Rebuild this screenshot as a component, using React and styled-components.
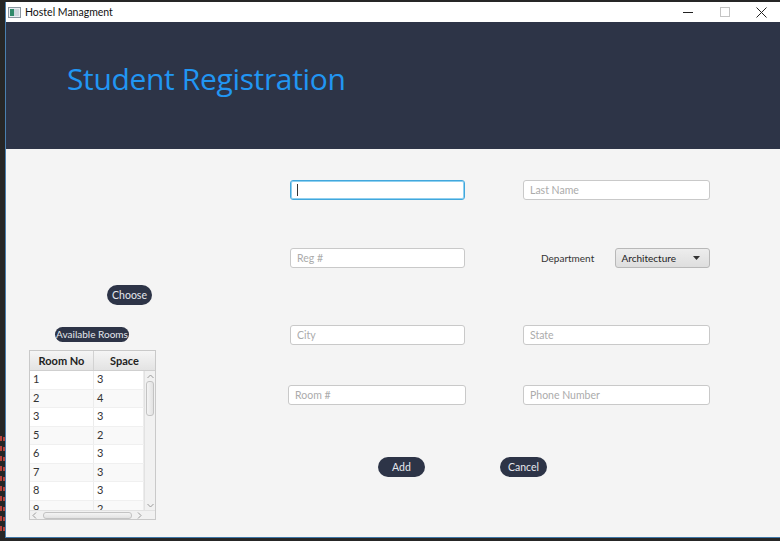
import React from 'react';
import styled, { createGlobalStyle } from 'styled-components';

const Global = createGlobalStyle`
  html, body {
    margin: 0;
    padding: 0;
    background: #262626;
    overflow: hidden;
  }
  * { box-sizing: border-box; }
`;

const ui = `"Lato", "Open Sans", sans-serif`;

const Desktop = styled.div`
  display: flex;
  width: 780px;
  height: 541px;
  padding-top: 2px;
  padding-bottom: 3px;
  font-family: ${ui};
`;

const Strip = styled.div`
  width: 5px;
  flex: none;
  overflow: hidden;
  padding-top: 432px;
`;

const Window = styled.div`
  flex: 1;
  display: flex;
  flex-direction: column;
  border-left: 1px solid #4a7fae;
  border-bottom: 1px solid #3f77a8;
  background: #f4f4f4;
`;

const TitleBar = styled.div`
  height: 20px;
  flex: none;
  display: flex;
  align-items: center;
  background: #fff;
  padding-left: 2px;
  font-size: 10.5px;
  color: #111;
`;

const TitleText = styled.span`
  margin-left: 4px;
  flex: 1;
`;

const WinButton = styled.div`
  width: 37px;
  height: 20px;
  display: flex;
  align-items: center;
  justify-content: center;
`;

const Header = styled.div`
  height: 127px;
  flex: none;
  background: #2d3447;
  padding: 36px 0 0 61px;
`;

const Title = styled.h1`
  margin: 0;
  font-family: "Open Sans", sans-serif;
  font-weight: 400;
  font-size: 30px;
  letter-spacing: -0.35px;
  color: #2196f3;
`;

const Body = styled.div`
  flex: 1;
  display: flex;
`;

const LeftPanel = styled.div`
  width: 274px;
  flex: none;
  display: flex;
  flex-direction: column;
  align-items: flex-start;
`;

const Pill = styled.button`
  border: none;
  background: #2d3447;
  color: #e6e8ee;
  font-family: ${ui};
  font-size: 10.5px;
  white-space: nowrap;
  height: ${p => (p.small ? '15px' : '20px')};
  width: ${p => p.w}px;
  border-radius: 10px;
  padding: 0 0 1px;
  display: flex;
  align-items: center;
  justify-content: center;
  margin-top: ${p => p.mt || 0}px;
  margin-left: ${p => p.ml || 0}px;
  ${p => p.small && 'font-size: 10px;'}
`;

const Table = styled.div`
  margin: 8px 0 0 23px;
  width: 127px;
  height: 170px;
  border: 1px solid #c9c9c9;
  background: #fff;
  display: flex;
  flex-direction: column;
  font-size: 11px;
  color: #333;
`;

const HeadRow = styled.div`
  height: 20px;
  flex: none;
  display: flex;
  background: linear-gradient(#f5f5f5, #e3e3e3);
  border-bottom: 1px solid #cfcfcf;
  font-weight: 700;
  font-size: 11px;
  color: #222;
`;

const HeadCell = styled.div`
  width: ${p => p.w}px;
  display: flex;
  align-items: center;
  justify-content: center;
  border-right: ${p => (p.last ? 'none' : '1px solid #d2d2d2')};
`;

const Middle = styled.div`
  height: 139px;
  display: flex;
`;

const Rows = styled.div`
  width: 114px;
  overflow: hidden;
`;

const Row = styled.div`
  height: 18.5px;
  display: flex;
  background: ${p => (p.odd ? '#f9f9f9' : '#fff')};
  border-bottom: 1px solid #f0f0f0;
`;

const Cell = styled.div`
  width: ${p => p.w}px;
  padding: 0 0 0 3px;
  line-height: 16px;
  border-right: 1px solid #ececec;
`;

const VScroll = styled.div`
  width: 11px;
  flex: none;
  background: #f1f1f1;
  border-left: 1px solid #e2e2e2;
  display: flex;
  flex-direction: column;
  align-items: center;
`;

const ArrowBox = styled.div`
  margin-top: ${p => p.mt || 0}px;
  margin-bottom: ${p => p.mb || 0}px;
  ${p => p.end && 'margin-top: auto;'}
`;

const VThumb = styled.div`
  width: 8px;
  height: 35px;
  margin-top: 2px;
  border: 1px solid #c3c3c3;
  border-radius: 3px;
  background: linear-gradient(90deg, #f4f4f4, #e2e2e2);
`;

const Bottom = styled.div`
  height: 10px;
  display: flex;
  background: #f1f1f1;
  border-top: 1px solid #e2e2e2;
`;

const HScroll = styled.div`
  width: 114px;
  display: flex;
  align-items: center;
  justify-content: space-between;
  padding: 0 2px;
`;

const HThumb = styled.div`
  width: 89px;
  height: 7px;
  border: 1px solid #c3c3c3;
  border-radius: 3px;
  background: linear-gradient(#f4f4f4, #e2e2e2);
`;

const Arrow = styled.svg`
  flex: none;
  display: block;
`;

const FormArea = styled.div`
  padding: 31px 0 0 10px;
  display: flex;
  flex-direction: column;
`;

const FormGrid = styled.div`
  display: grid;
  grid-template-columns: 175px 187px;
  grid-template-rows: 68px 77px 60px 20px;
  column-gap: 58px;
  align-items: start;
`;

const Field = styled.div`
  position: relative;
  width: ${p => p.w || 175}px;
  height: 20px;
  margin-left: ${p => p.shift || 0}px;
`;

const Input = styled.input`
  display: block;
  width: 100%;
  height: 20px;
  border: 1px solid ${p => (p.focused ? '#41a7dc' : '#c9c9c9')};
  box-shadow: ${p => (p.focused ? 'inset 0 0 0 1px #8fd0f0' : 'none')};
  border-radius: 3px;
  background: #fff;
  padding: 0 6px;
  font-family: ${ui};
  font-size: 10.5px;
  color: #333;
  outline: none;
  caret-color: transparent;
  &::placeholder { color: #ababab; }
`;

const Caret = styled.span`
  position: absolute;
  left: 7px;
  top: 4px;
  width: 1px;
  height: 12px;
  background: #333;
`;

const DeptCell = styled.div`
  display: flex;
  align-items: center;
  height: 20px;
  padding-left: 18px;
`;

const Label = styled.span`
  font-size: 10px;
  color: #333;
  width: 74px;
`;

const Combo = styled.div`
  width: 96px;
  height: 20px;
  border: 1px solid #b8b8b8;
  border-radius: 3px;
  background: linear-gradient(#ededed, #dedede);
  display: flex;
  align-items: center;
  justify-content: space-between;
  padding: 0 9px 0 6px;
  font-size: 10px;
  color: #222;
`;

const Actions = styled.div`
  display: flex;
  margin: 52px 0 0 88px;
  gap: 75px;
`;

const rooms = [
  [1, 3], [2, 4], [3, 3], [5, 2], [6, 3], [7, 3], [8, 3], [9, 2],
];

const Small = ({ d, w = 7, h = 5 }) => (
  <Arrow width={w} height={h} viewBox={`0 0 ${w} ${h}`}>
    <path d={d} fill="none" stroke="#9a9a9a" strokeWidth="1" />
  </Arrow>
);

// bits of a terminal peeking out from behind the window
const TermMarks = () => (
  <svg width="5" height="100">
    {Array.from({ length: 10 }, (_, i) => (
      <g key={i} fill="#b8433c">
        <rect x="0" y={i * 10 + 2} width="2" height="5" />
        <rect x="3" y={i * 10 + 3} width="2" height="4" />
      </g>
    ))}
  </svg>
);

export default function App() {
  return (
    <>
      <Global />
      <Desktop>
        <Strip><TermMarks /></Strip>
        <Window>
          <TitleBar>
            <svg width="13" height="11" viewBox="0 0 13 11">
              <rect x="0.5" y="0.5" width="12" height="10" fill="#e9eef2" stroke="#8a96a0" />
              <rect x="2" y="2" width="4" height="7" fill="#2f8a6a" />
              <rect x="6" y="2" width="5" height="7" fill="#cdd7de" />
            </svg>
            <TitleText>Hostel Managment</TitleText>
            <WinButton>
              <svg width="10" height="10"><path d="M0 5.5h10" stroke="#222" /></svg>
            </WinButton>
            <WinButton>
              <svg width="10" height="10"><rect x="0.5" y="0.5" width="9" height="9" fill="none" stroke="#c4c4c4" /></svg>
            </WinButton>
            <WinButton>
              <svg width="11" height="11"><path d="M0.5 0.5l10 10M10.5 0.5l-10 10" stroke="#222" /></svg>
            </WinButton>
          </TitleBar>
          <Header>
            <Title>Student Registration</Title>
          </Header>
          <Body>
            <LeftPanel>
              <Pill w={45} mt={136} ml={101}>Choose</Pill>
              <Pill small w={74} mt={22} ml={49}>Available Rooms</Pill>
              <Table>
                <HeadRow>
                  <HeadCell w={64}>Room No</HeadCell>
                  <HeadCell w={61} last>Space</HeadCell>
                </HeadRow>
                <Middle>
                  <Rows>
                    {rooms.map(([no, sp], i) => (
                      <Row key={no} odd={i % 2 === 1}>
                        <Cell w={64}>{no}</Cell>
                        <Cell w={50}>{sp}</Cell>
                      </Row>
                    ))}
                  </Rows>
                  <VScroll>
                    <ArrowBox mt={3}><Small d="M0.5 4L3.5 1L6.5 4" /></ArrowBox>
                    <VThumb />
                    <ArrowBox end mb={2}><Small d="M0.5 1L3.5 4L6.5 1" /></ArrowBox>
                  </VScroll>
                </Middle>
                <Bottom>
                  <HScroll>
                    <Small w={5} h={7} d="M4 0.5L1 3.5L4 6.5" />
                    <HThumb />
                    <Small w={5} h={7} d="M1 0.5L4 3.5L1 6.5" />
                  </HScroll>
                </Bottom>
              </Table>
            </LeftPanel>
            <FormArea>
              <FormGrid>
                <Field>
                  <Input focused defaultValue="" />
                  <Caret />
                </Field>
                <Field w={187}><Input placeholder="Last Name" /></Field>
                <Field><Input placeholder="Reg #" /></Field>
                <DeptCell>
                  <Label>Department</Label>
                  <Combo>
                    <span>Architecture</span>
                    <svg width="7" height="4"><path d="M0 0h7L3.5 4z" fill="#333" /></svg>
                  </Combo>
                </DeptCell>
                <Field><Input placeholder="City" /></Field>
                <Field w={187}><Input placeholder="State" /></Field>
                <Field w={178} shift={-2}><Input placeholder="Room #" /></Field>
                <Field w={187}><Input placeholder="Phone Number" /></Field>
              </FormGrid>
              <Actions>
                <Pill w={47}>Add</Pill>
                <Pill w={47}>Cancel</Pill>
              </Actions>
            </FormArea>
          </Body>
        </Window>
      </Desktop>
    </>
  );
}
